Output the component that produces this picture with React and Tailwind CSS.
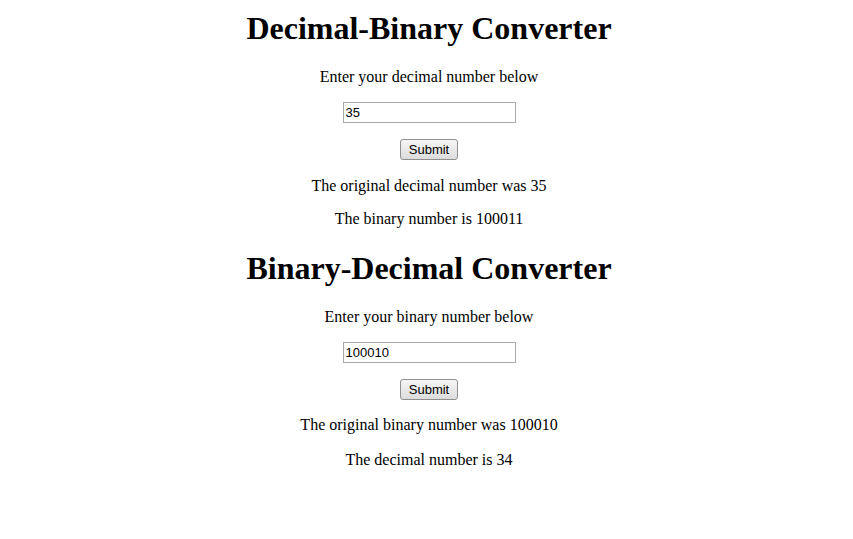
import { useState } from 'react';

function toBinary(n) {
  const v = parseInt(n, 10);
  return Number.isNaN(v) ? '' : v.toString(2);
}

function toDecimal(b) {
  const v = parseInt(b, 2);
  return Number.isNaN(v) ? '' : String(v);
}

function Field({ value, onChange }) {
  return (
    <input
      type="text"
      value={value}
      onChange={(e) => onChange(e.target.value)}
      className="mt-[16px] block w-[173px] h-[21px] border border-[#a9a9a9] bg-white px-[2px] text-[13px] leading-[19px] text-black outline-none font-['Liberation_Sans',Arial,sans-serif]"
    />
  );
}

function SubmitButton({ onClick }) {
  return (
    <button
      type="button"
      onClick={onClick}
      className="mt-[16px] block w-[58px] h-[21px] border border-[#8f8f8f] rounded-[3px] bg-gradient-to-b from-[#f6f6f6] to-[#dcdcdc] text-[13px] leading-[19px] text-black font-['Liberation_Sans',Arial,sans-serif]"
    >
      Submit
    </button>
  );
}

export default function App() {
  const [dec, setDec] = useState('35');
  const [decDone, setDecDone] = useState('35');
  const [bin, setBin] = useState('100010');
  const [binDone, setBinDone] = useState('100010');

  return (
    <div className="min-h-[539px] w-full bg-white text-black pl-[5px] flex flex-col items-center text-center font-['Liberation_Serif','Times_New_Roman',serif]">
      <h1 className="mt-[10px] h-[37px] text-[32px] leading-[37px] font-bold">Decimal-Binary Converter</h1>
      <p className="mt-[21px] h-[18px] text-[16px] leading-[18px]">Enter your decimal number below</p>
      <Field value={dec} onChange={setDec} />
      <SubmitButton onClick={() => setDecDone(dec)} />
      <p className="mt-[17px] h-[18px] text-[16px] leading-[18px]">The original decimal number was {decDone}</p>
      <p className="mt-[15px] h-[18px] text-[16px] leading-[18px]">The binary number is {toBinary(decDone)}</p>

      <h1 className="mt-[22px] h-[37px] text-[32px] leading-[37px] font-bold">Binary-Decimal Converter</h1>
      <p className="mt-[21px] h-[18px] text-[16px] leading-[18px]">Enter your binary number below</p>
      <Field value={bin} onChange={setBin} />
      <SubmitButton onClick={() => setBinDone(bin)} />
      <p className="mt-[16px] h-[18px] text-[16px] leading-[18px]">The original binary number was {binDone}</p>
      <p className="mt-[17px] h-[18px] text-[16px] leading-[18px]">The decimal number is {toDecimal(binDone)}</p>
    </div>
  );
}
